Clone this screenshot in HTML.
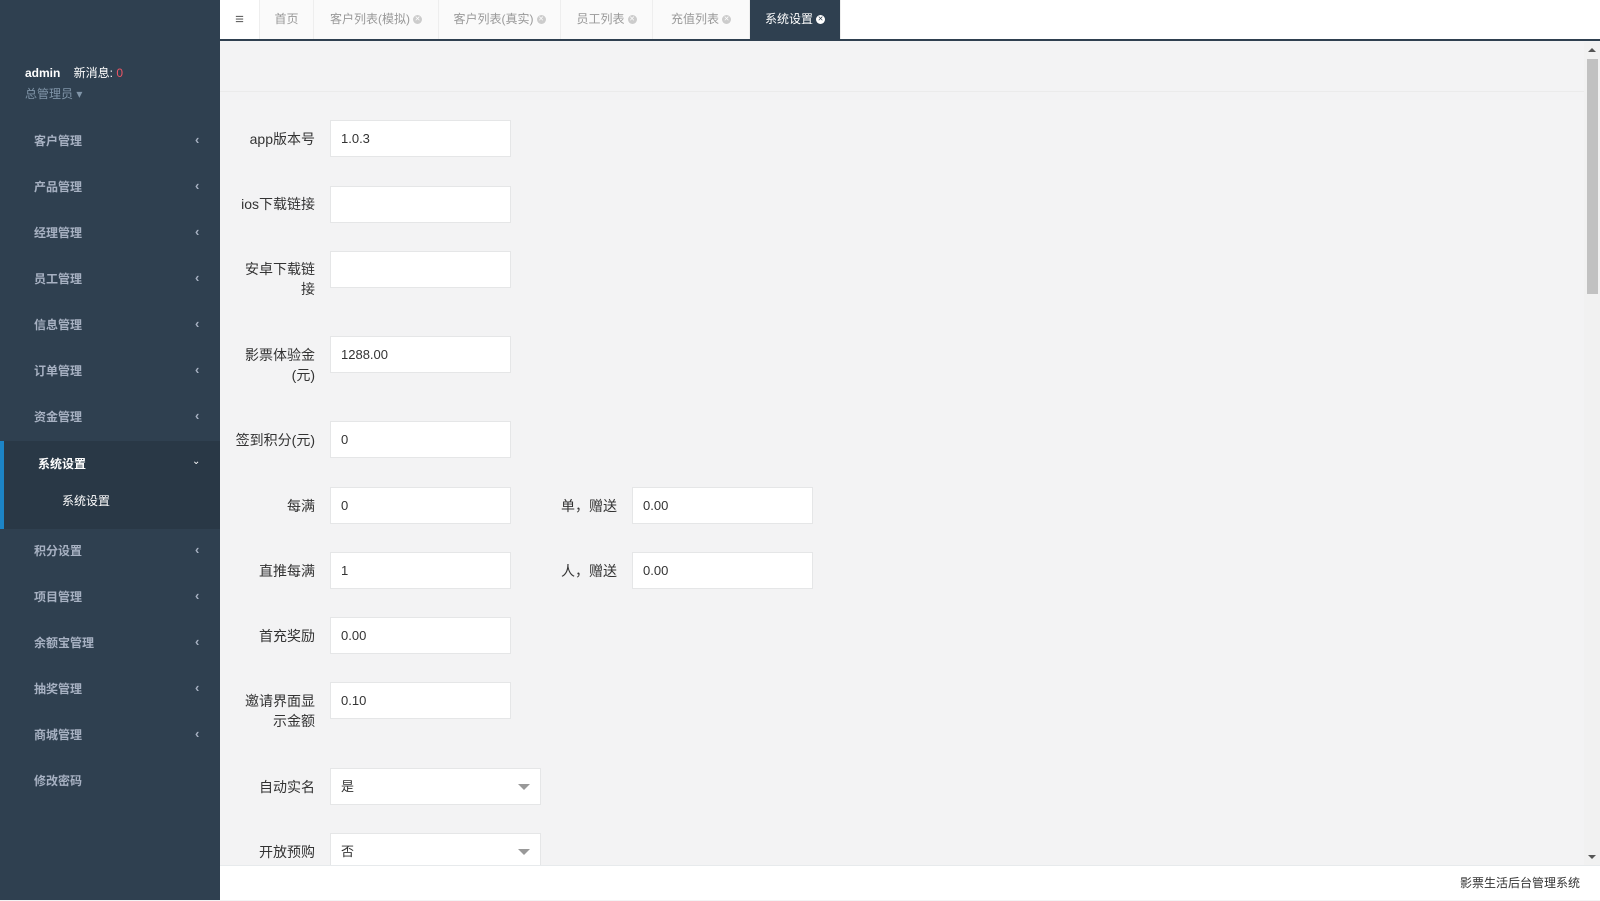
<!DOCTYPE html>
<html><head><meta charset="utf-8"><style>
*{margin:0;padding:0;box-sizing:border-box}
body{width:1600px;height:900px;overflow:hidden;background:#f3f3f4;font-family:"Liberation Sans","Noto Sans CJK SC",sans-serif;font-size:13px;color:#676a6c;position:relative}
.side{position:absolute;left:0;top:0;width:220px;height:900px;background:#2f4050}
.prof{position:absolute;left:25px;top:64px;color:#fff;font-size:12px}
.prof b{font-weight:bold}
.prof .r{color:#ed5565}
.prof .sub{color:#8095a8;margin-top:4px}
.mi{position:absolute;left:0;width:220px;height:46px;line-height:46px;padding-left:34px;color:#a7b1c2;font-size:12px;font-weight:bold}
.mi:after{content:"‹";position:absolute;left:195px;top:-1px;font-size:13px}
.mi.n:after{content:""}
.act{position:absolute;left:0;top:441px;width:220px;height:88px;background:#293846;border-left:4px solid #1c84c6}
.act .t{position:absolute;left:34px;top:0;line-height:46px;color:#fff;font-weight:bold;font-size:12px}
.act .c{position:absolute;left:188px;top:15px;color:#fff;font-size:10px}
.act .s{position:absolute;left:58px;top:51px;color:#fff;font-size:12px}
.top{position:absolute;left:220px;top:0;width:1380px;height:41px;background:#fff;border-bottom:2px solid #2f4050}
.tab{position:absolute;top:0;height:39px;line-height:39px;font-size:12px;color:#999;background:#fafafa;border-right:1px solid #eee;text-align:center}
.x{display:inline-block;width:9px;height:9px;border-radius:50%;background:#ccc;color:#fff;font-size:7px;line-height:9px;vertical-align:middle;margin-left:3px}
.tab.a{background:#2f4050;color:#fff}
.tab.a .x{background:#fff;color:#2f4050}
.band{position:absolute;left:220px;top:41px;width:1364px;height:51px;background:#f3f3f4;border-bottom:1px solid #ebebeb}
.lab{position:absolute;width:90px;text-align:right;color:#333;font-size:14px;line-height:20px}
.in{position:absolute;width:181px;height:37px;background:#fff;border:1px solid #e5e6e7;color:#333;font-size:13px;line-height:35px;padding-left:10px}
.sel{width:211px}
.sel:after{content:"";position:absolute;right:10px;top:15px;border:6px solid transparent;border-top:6px solid #999}
.foot{position:absolute;left:220px;top:865px;width:1380px;height:35px;background:#fff;border-top:1px solid #e7eaec;font-size:12px;color:#333;text-align:right;padding-right:20px;line-height:35px}
.sb{position:absolute;left:1584px;top:42px;width:16px;height:823px;background:#f1f1f1}
.sb i{position:absolute;left:3px;top:17px;width:11px;height:235px;background:#c1c1c1}
.sb b{position:absolute;left:4px;border:4px solid transparent}
</style></head><body>
<div class="side">
<div class="prof"><b>admin</b>&nbsp;&nbsp;&nbsp; 新消息: <span class="r">0</span><div class="sub">总管理员 ▾</div></div>
<div class="mi" style="top:118px">客户管理</div>
<div class="mi" style="top:164px">产品管理</div>
<div class="mi" style="top:210px">经理管理</div>
<div class="mi" style="top:256px">员工管理</div>
<div class="mi" style="top:302px">信息管理</div>
<div class="mi" style="top:348px">订单管理</div>
<div class="mi" style="top:394px">资金管理</div>
<div class="act"><span class="t">系统设置</span><span class="c">⌄</span><span class="s">系统设置</span></div>
<div class="mi" style="top:528px">积分设置</div>
<div class="mi" style="top:574px">项目管理</div>
<div class="mi" style="top:620px">余额宝管理</div>
<div class="mi" style="top:666px">抽奖管理</div>
<div class="mi" style="top:712px">商城管理</div>
<div class="mi n" style="top:758px">修改密码</div>
</div>
<div class="top">
<div class="tab" style="left:0;width:40px;background:#fff;font-size:15px;color:#666">≡</div>
<div class="tab" style="left:40px;width:54px">首页</div>
<div class="tab" style="left:94px;width:125px">客户列表(模拟)<span class="x">✕</span></div>
<div class="tab" style="left:219px;width:122px">客户列表(真实)<span class="x">✕</span></div>
<div class="tab" style="left:341px;width:92px">员工列表<span class="x">✕</span></div>
<div class="tab" style="left:433px;width:97px">充值列表<span class="x">✕</span></div>
<div class="tab a" style="left:530px;width:91px">系统设置<span class="x">✕</span></div>
</div>
<div class="band"></div>
<div class="lab" style="left:225px;top:129px">app版本号</div><div class="in" style="left:330px;top:120px">1.0.3</div>
<div class="lab" style="left:225px;top:194px">ios下载链接</div><div class="in" style="left:330px;top:186px"></div>
<div class="lab" style="left:225px;top:259px">安卓下载链<br>接</div><div class="in" style="left:330px;top:251px"></div>
<div class="lab" style="left:225px;top:345px">影票体验金<br>(元)</div><div class="in" style="left:330px;top:336px">1288.00</div>
<div class="lab" style="left:215px;top:430px;width:100px">签到积分(元)</div><div class="in" style="left:330px;top:421px">0</div>
<div class="lab" style="left:225px;top:496px">每满</div><div class="in" style="left:330px;top:487px">0</div>
<div class="lab" style="left:527px;top:496px">单，赠送</div><div class="in" style="left:632px;top:487px">0.00</div>
<div class="lab" style="left:225px;top:561px">直推每满</div><div class="in" style="left:330px;top:552px">1</div>
<div class="lab" style="left:527px;top:561px">人，赠送</div><div class="in" style="left:632px;top:552px">0.00</div>
<div class="lab" style="left:225px;top:626px">首充奖励</div><div class="in" style="left:330px;top:617px">0.00</div>
<div class="lab" style="left:225px;top:691px">邀请界面显<br>示金额</div><div class="in" style="left:330px;top:682px">0.10</div>
<div class="lab" style="left:225px;top:777px">自动实名</div><div class="in sel" style="left:330px;top:768px">是</div>
<div class="lab" style="left:225px;top:842px">开放预购</div><div class="in sel" style="left:330px;top:833px">否</div>
<div class="sb"><b style="top:2px;border-bottom-color:#555"></b><i></i><b style="bottom:2px;border-top-color:#555"></b></div>
<div class="foot">影票生活后台管理系统</div>
</body></html>
